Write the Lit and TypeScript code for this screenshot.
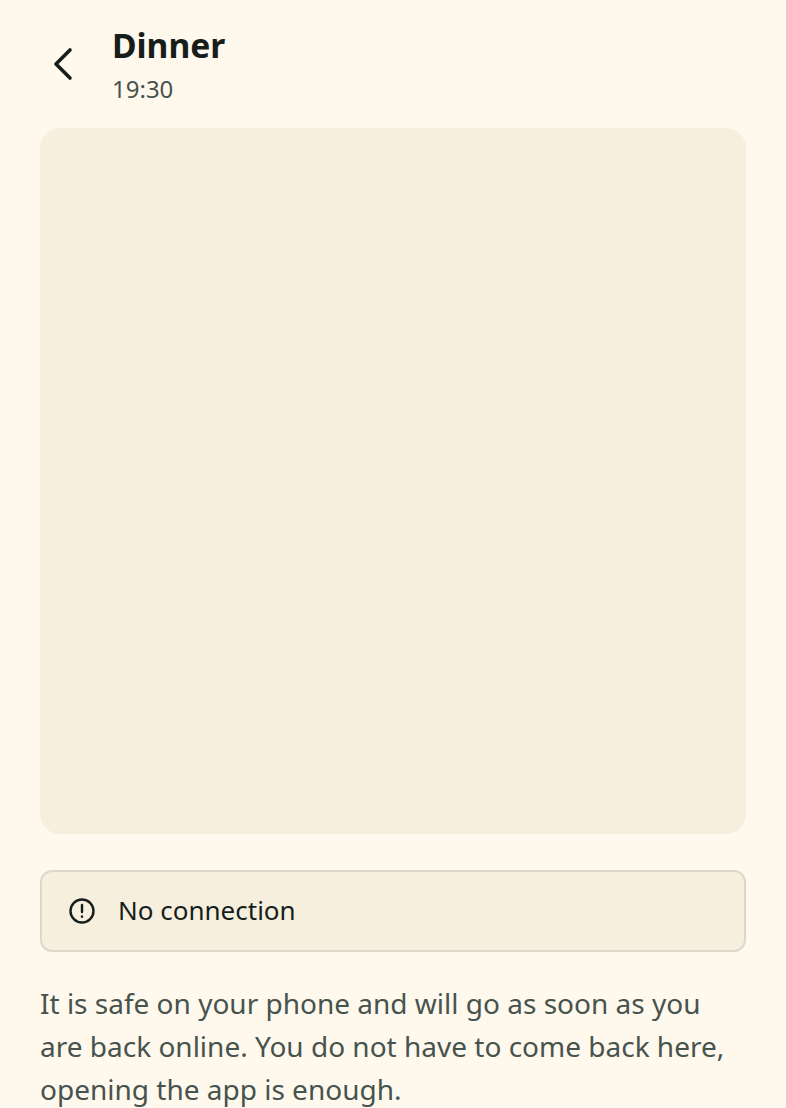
import { LitElement, html, css } from "lit";
import { customElement } from "lit/decorators.js";

@customElement("app-root")
export class AppRoot extends LitElement {
  static styles = css`
    :host { display: block; background: #fff8ec; height: 1108px; overflow: hidden; font-family: "Noto Sans", sans-serif; color: #161d1a; }
    .page { display: flex; flex-direction: column; padding: 0 40px; }
    .header { display: flex; align-items: flex-start; height: 128px; box-sizing: border-box; }
    .back { width: 46px; flex: none; display: flex; margin-right: 26px; margin-top: 40px; }
    .titles { display: flex; flex-direction: column; padding-top: 23px; }
    .title { font-size: 33.6px; font-weight: 700; line-height: 44px; }
    .time { font-size: 24px; line-height: 34px; margin-top: 5px; color: #47534e; }
    .map { height: 706px; background: #f6efde; border-radius: 20px; }
    .banner { margin-top: 36px; height: 82px; box-sizing: border-box; background: #f6efde; border: 2px solid #dcd8c9; border-radius: 12px; display: flex; align-items: center; padding: 0 26px; gap: 22px; font-size: 26px; }
    .banner span { margin-top: -2px; }
    .note { margin: 30px 0 0; font-size: 28px; line-height: 43px; padding-top: 0.4px; color: #47534e; }
  `;
  render() {
    return html`<div class="page">
      <div class="header">
        <div class="back"><svg width="46" height="46" viewBox="0 0 46 46" fill="none" stroke="#161d1a" stroke-width="3.6" stroke-linecap="round" stroke-linejoin="round"><path d="M30 10 16 24 30 38"/></svg></div>
        <div class="titles"><div class="title">Dinner</div><div class="time">19:30</div></div>
      </div>
      <div class="map"></div>
      <div class="banner"><svg width="28" height="28" viewBox="0 0 28 28" fill="none" stroke="#161d1a" stroke-width="2.4" stroke-linecap="round"><circle cx="14" cy="14" r="11.5"/><path d="M14 8v7M14 19.5v.2"/></svg><span>No connection</span></div>
      <p class="note">It is safe on your phone and will go as soon as you are back online. You do not have to come back here, opening the app is enough.</p>
    </div>`;
  }
}
